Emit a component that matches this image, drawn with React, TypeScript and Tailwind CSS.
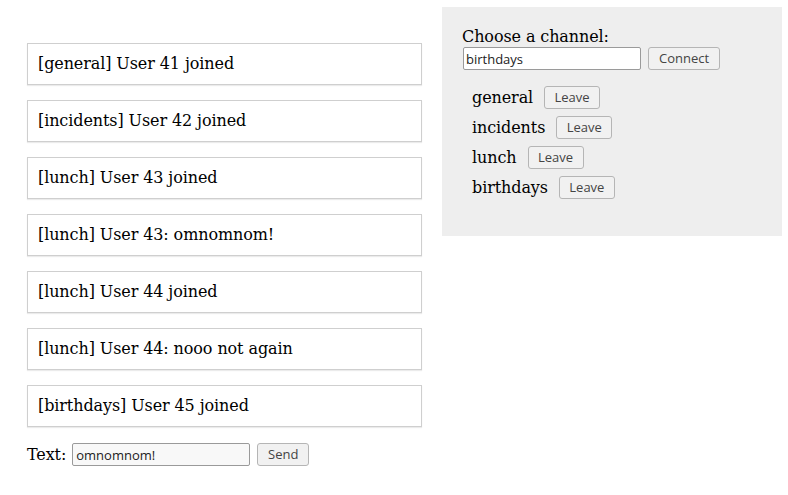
import React from "react";

const messages = [
  "[general] User 41 joined",
  "[incidents] User 42 joined",
  "[lunch] User 43 joined",
  "[lunch] User 43: omnomnom!",
  "[lunch] User 44 joined",
  "[lunch] User 44: nooo not again",
  "[birthdays] User 45 joined",
];

const channels = ["general", "incidents", "lunch", "birthdays"];

const btn =
  "h-[23px] px-[9px] border border-[#b5b5b5] rounded-[3px] bg-[#f1f1f1] text-[#444] text-[13px] leading-none tracking-normal [font-family:'Open_Sans','Noto_Sans',sans-serif]";

export default function App() {
  return (
    <div className="w-[788px] h-[495px] bg-white flex items-start [font-family:'DejaVu_Serif',serif] text-[16px] tracking-[-0.1px] text-black">
      <div className="ml-[27px] mt-[43px] w-[395px] flex flex-col">
        <div className="flex flex-col gap-[15px]">
          {messages.map((m) => (
            <div
              key={m}
              className="h-[42px] border border-[#cfcfcf] shadow-[0_1px_1px_rgba(0,0,0,0.08)] flex items-center pl-[10px]"
            >
              {m}
            </div>
          ))}
        </div>
        <div className="mt-[16px] flex items-center h-[23px]">
          <span>Text:</span>
          <input
            readOnly
            value="omnomnom!"
            className="ml-[6px] w-[178px] h-[23px] border border-[#9a9a9a] rounded-[2px] bg-[#f8f8f8] px-[3px] text-[13px] tracking-normal text-[#222] [font-family:'Open_Sans','Noto_Sans',sans-serif] outline-none"
          />
          <button className={`${btn} ml-[7px] w-[52px] px-0`}>Send</button>
        </div>
      </div>
      <div className="ml-[20px] mt-[7px] w-[340px] h-[229px] bg-[#eeeeee] pt-[19px] pl-[20px]">
        <div className="leading-[21px]">Choose a channel:</div>
        <div className="flex items-center">
          <input
            readOnly
            value="birthdays"
            className="ml-[1px] w-[178px] h-[23px] border border-[#9a9a9a] rounded-[2px] bg-white px-[2px] text-[13px] tracking-normal text-[#222] [font-family:'Open_Sans','Noto_Sans',sans-serif] outline-none"
          />
          <button className={`${btn} ml-[7px] w-[72px] px-0`}>Connect</button>
        </div>
        <div className="ml-[10px] mt-[16px] flex flex-col gap-[7px]">
          {channels.map((c) => (
            <div key={c} className="flex items-center h-[23px]">
              <span>{c}</span>
              <button className={`${btn} ml-[11px] w-[56px] px-0`}>Leave</button>
            </div>
          ))}
        </div>
      </div>
    </div>
  );
}
